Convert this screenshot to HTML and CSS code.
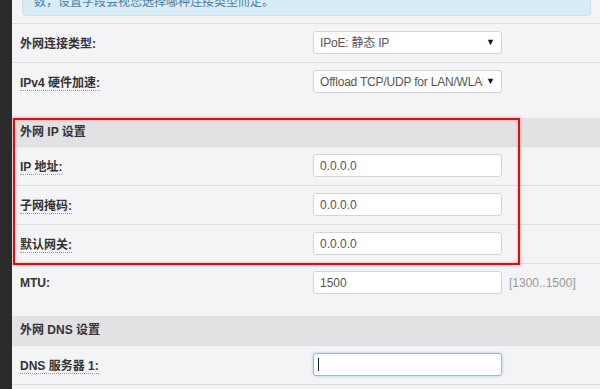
FILE: index.html
```html
<!DOCTYPE html>
<html lang="zh-CN">

<head>
    <meta charset="UTF-8" />
    <meta name="viewport" content="width=device-width, initial-scale=1.0" />
    <title>外网设置</title>
    <link rel="stylesheet" href="styles.css">
</head>

<body>
    <div class="sidebar"></div>
    <div class="main">
        <div class="alert">数，设置字段会视您选择哪种连接类型而定。</div>

        <!-- Connection type -->
        <div class="section section-top">
            <div class="row">
                <span class="label">外网连接类型:</span>
                <div class="select-wrap">
                    <select class="field">
                        <option>IPoE: 静态 IP</option>
                    </select>
                </div>
            </div>
            <div class="row">
                <span class="label tip">IPv4 硬件加速:</span>
                <div class="select-wrap">
                    <select class="field">
                        <option>Offload TCP/UDP for LAN/WLAN</option>
                    </select>
                </div>
            </div>
        </div>

        <!-- WAN IP -->
        <div class="section section-ip">
            <div class="section-title">外网 IP 设置</div>
            <div class="row">
                <span class="label tip">IP 地址:</span>
                <input class="field" type="text" value="0.0.0.0">
            </div>
            <div class="row">
                <span class="label tip">子网掩码:</span>
                <input class="field" type="text" value="0.0.0.0">
            </div>
            <div class="row">
                <span class="label tip">默认网关:</span>
                <input class="field" type="text" value="0.0.0.0">
            </div>
            <div class="row">
                <span class="label">MTU:</span>
                <input class="field" type="text" value="1500">
                <span class="hint">[1300..1500]</span>
            </div>
            <div class="highlight"></div>
        </div>

        <!-- WAN DNS -->
        <div class="section">
            <div class="section-title dns-title">外网 DNS 设置</div>
            <div class="row row-last">
                <span class="label tip">DNS 服务器 1:</span>
                <div class="input-wrap">
                    <input class="field focused" type="text" value="">
                    <span class="caret"></span>
                </div>
            </div>
        </div>
    </div>
</body>

</html>
```

FILE: styles.css
```css
body {
    margin: 0;
    display: flex;
    height: 389px;
    font-family: "Liberation Sans", "Noto Sans CJK SC", sans-serif;
    font-size: 12px;
    color: #333;
    background-color: #f4f3f6;
    overflow: hidden;
}

.sidebar {
    width: 12px;
    flex-shrink: 0;
    background-color: #2a2a2a;
}

.main {
    flex: 1;
    overflow: hidden;
}

.alert {
    margin: -12px 9px 7px 10px;
    padding: 5px 11px 5px;
    line-height: 16px;
    background-color: #d9ebf5;
    border: 1px solid #c8e0ee;
    border-radius: 4px;
    color: #4a7fa5;
}

.section {
    position: relative;
}

.section-top {
    padding-bottom: 17px;
}

.section-ip {
    padding-bottom: 14px;
}

.section-title {
    height: 28px;
    line-height: 28px;
    padding-left: 8px;
    background-color: #e2e1e4;
    font-weight: bold;
}

.dns-title {
    height: 29px;
    line-height: 29px;
}

.row {
    display: grid;
    grid-template-columns: 293px 189px auto;
    align-items: center;
    min-height: 23px;
    padding: 7px 8px 8px;
    border-top: 1px solid #dddce0;
}

.row-last {
    border-bottom: 1px solid #dddce0;
}

.label {
    justify-self: start;
    font-weight: bold;
    color: #333;
}

.tip {
    border-bottom: 1px dotted #999;
}

.field {
    box-sizing: border-box;
    width: 189px;
    height: 23px;
    padding: 0 6px;
    font-family: "Liberation Sans", "Noto Sans CJK SC", sans-serif;
    font-size: 12px;
    color: #555;
    background-color: #fff;
    border: 1px solid #d4d4d4;
    border-radius: 3px;
    outline: none;
}

.select-wrap {
    position: relative;
    width: 189px;
}

.select-wrap select {
    appearance: none;
    -webkit-appearance: none;
    padding-right: 16px;
    padding-left: 6px;
    letter-spacing: -0.2px;
}

.select-wrap::after {
    content: "\25BC";
    position: absolute;
    right: 7px;
    top: 6px;
    font-size: 9px;
    color: #111;
    background-color: #fff;
    padding-left: 3px;
    pointer-events: none;
}

.hint {
    padding-left: 7px;
    color: #999;
}

.input-wrap {
    position: relative;
    width: 189px;
}

.focused {
    border-color: #8fbde6;
    box-shadow: 0 0 3px rgba(102, 175, 233, 0.6);
}

.caret {
    position: absolute;
    left: 5px;
    top: 5px;
    width: 1px;
    height: 13px;
    background-color: #222;
}

.highlight {
    position: absolute;
    left: 1px;
    top: 0;
    width: 507px;
    height: 147px;
    box-sizing: border-box;
    border: 2px solid #cc1420;
    box-shadow: 0 0 2px 1px rgba(230, 110, 110, 0.45), inset 0 0 2px 1px rgba(230, 110, 110, 0.35);
    pointer-events: none;
}
```
